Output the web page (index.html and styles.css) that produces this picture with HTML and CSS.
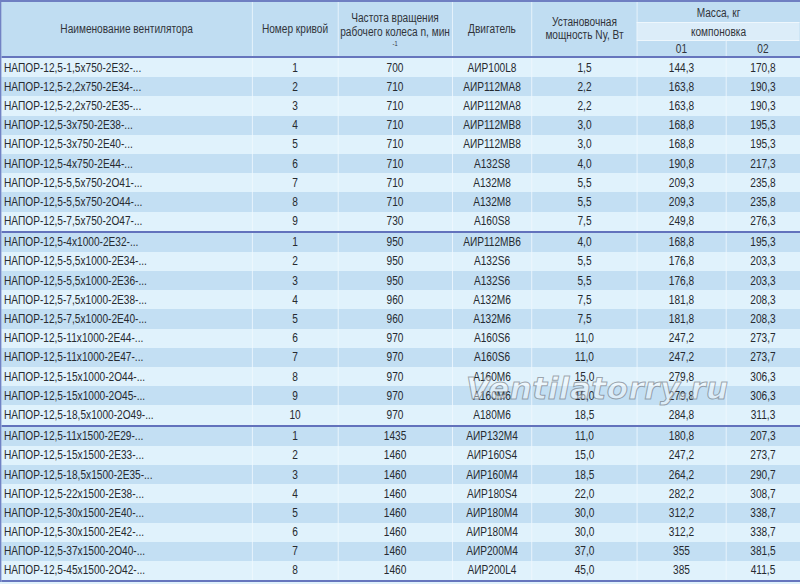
FILE: index.html
```html
<!DOCTYPE html>
<html lang="ru">
<head>
<meta charset="utf-8">
<title>Вентиляторы НАПОР-12,5</title>
<link rel="stylesheet" href="styles.css">
</head>
<body>
<div class="page">
<div class="sheet">
  <div class="head">
    <div class="h c1">Наименование вентилятора</div>
    <div class="h c2">Номер кривой</div>
    <div class="h c3"><span>Частота вращения</span><span>рабочего колеса n, мин</span><span class="sup">-1</span></div>
    <div class="h c4">Двигатель</div>
    <div class="h c5"><span>Установочная</span><span>мощность Ny, Вт</span></div>
    <div class="h mass">Масса, кг</div>
    <div class="h komp">компоновка</div>
    <div class="h v01">01</div>
    <div class="h v02">02</div>
  </div>
  <div class="rows">
    <div class="r"><span>НАПОР-12,5-1,5х750-2Е32-...</span><span>1</span><span>700</span><span>АИР100L8</span><span>1,5</span><span>144,3</span><span>170,8</span></div>
    <div class="r"><span>НАПОР-12,5-2,2х750-2Е34-...</span><span>2</span><span>710</span><span>АИР112МА8</span><span>2,2</span><span>163,8</span><span>190,3</span></div>
    <div class="r"><span>НАПОР-12,5-2,2х750-2Е35-...</span><span>3</span><span>710</span><span>АИР112МА8</span><span>2,2</span><span>163,8</span><span>190,3</span></div>
    <div class="r"><span>НАПОР-12,5-3х750-2Е38-...</span><span>4</span><span>710</span><span>АИР112МВ8</span><span>3,0</span><span>168,8</span><span>195,3</span></div>
    <div class="r"><span>НАПОР-12,5-3х750-2Е40-...</span><span>5</span><span>710</span><span>АИР112МВ8</span><span>3,0</span><span>168,8</span><span>195,3</span></div>
    <div class="r"><span>НАПОР-12,5-4х750-2Е44-...</span><span>6</span><span>710</span><span>А132S8</span><span>4,0</span><span>190,8</span><span>217,3</span></div>
    <div class="r"><span>НАПОР-12,5-5,5х750-2О41-...</span><span>7</span><span>710</span><span>А132М8</span><span>5,5</span><span>209,3</span><span>235,8</span></div>
    <div class="r"><span>НАПОР-12,5-5,5х750-2О44-...</span><span>8</span><span>710</span><span>А132М8</span><span>5,5</span><span>209,3</span><span>235,8</span></div>
    <div class="r"><span>НАПОР-12,5-7,5х750-2О47-...</span><span>9</span><span>730</span><span>А160S8</span><span>7,5</span><span>249,8</span><span>276,3</span></div>
    <div class="r grp"><span>НАПОР-12,5-4х1000-2Е32-...</span><span>1</span><span>950</span><span>АИР112МВ6</span><span>4,0</span><span>168,8</span><span>195,3</span></div>
    <div class="r"><span>НАПОР-12,5-5,5х1000-2Е34-...</span><span>2</span><span>950</span><span>А132S6</span><span>5,5</span><span>176,8</span><span>203,3</span></div>
    <div class="r"><span>НАПОР-12,5-5,5х1000-2Е36-...</span><span>3</span><span>950</span><span>А132S6</span><span>5,5</span><span>176,8</span><span>203,3</span></div>
    <div class="r"><span>НАПОР-12,5-7,5х1000-2Е38-...</span><span>4</span><span>960</span><span>А132М6</span><span>7,5</span><span>181,8</span><span>208,3</span></div>
    <div class="r"><span>НАПОР-12,5-7,5х1000-2Е40-...</span><span>5</span><span>960</span><span>А132М6</span><span>7,5</span><span>181,8</span><span>208,3</span></div>
    <div class="r"><span>НАПОР-12,5-11х1000-2Е44-...</span><span>6</span><span>970</span><span>А160S6</span><span>11,0</span><span>247,2</span><span>273,7</span></div>
    <div class="r"><span>НАПОР-12,5-11х1000-2Е47-...</span><span>7</span><span>970</span><span>А160S6</span><span>11,0</span><span>247,2</span><span>273,7</span></div>
    <div class="r"><span>НАПОР-12,5-15х1000-2О44-...</span><span>8</span><span>970</span><span>А160М6</span><span>15,0</span><span>279,8</span><span>306,3</span></div>
    <div class="r"><span>НАПОР-12,5-15х1000-2О45-...</span><span>9</span><span>970</span><span>А160М6</span><span>15,0</span><span>279,8</span><span>306,3</span></div>
    <div class="r"><span>НАПОР-12,5-18,5х1000-2О49-...</span><span>10</span><span>970</span><span>А180М6</span><span>18,5</span><span>284,8</span><span>311,3</span></div>
    <div class="r grp"><span>НАПОР-12,5-11х1500-2Е29-...</span><span>1</span><span>1435</span><span>АИР132М4</span><span>11,0</span><span>180,8</span><span>207,3</span></div>
    <div class="r"><span>НАПОР-12,5-15х1500-2Е33-...</span><span>2</span><span>1460</span><span>АИР160S4</span><span>15,0</span><span>247,2</span><span>273,7</span></div>
    <div class="r"><span>НАПОР-12,5-18,5х1500-2Е35-...</span><span>3</span><span>1460</span><span>АИР160М4</span><span>18,5</span><span>264,2</span><span>290,7</span></div>
    <div class="r"><span>НАПОР-12,5-22х1500-2Е38-...</span><span>4</span><span>1460</span><span>АИР180S4</span><span>22,0</span><span>282,2</span><span>308,7</span></div>
    <div class="r"><span>НАПОР-12,5-30х1500-2Е40-...</span><span>5</span><span>1460</span><span>АИР180М4</span><span>30,0</span><span>312,2</span><span>338,7</span></div>
    <div class="r"><span>НАПОР-12,5-30х1500-2Е42-...</span><span>6</span><span>1460</span><span>АИР180М4</span><span>30,0</span><span>312,2</span><span>338,7</span></div>
    <div class="r"><span>НАПОР-12,5-37х1500-2О40-...</span><span>7</span><span>1460</span><span>АИР200М4</span><span>37,0</span><span>355</span><span>381,5</span></div>
    <div class="r"><span>НАПОР-12,5-45х1500-2О42-...</span><span>8</span><span>1460</span><span>АИР200L4</span><span>45,0</span><span>385</span><span>411,5</span></div>
  </div>
</div>
<div class="mark">Ventilatorry.ru</div>
</div>
</body>
</html>
```
FILE: styles.css
```css
html, body {
  margin: 0;
  padding: 0;
  background: #dff1fb;
}
body {
  width: 800px;
  height: 584px;
  overflow: hidden;
  font-family: "Liberation Sans", Arial, sans-serif;
  font-size: 12.5px;
  color: #262a30;
}
.page {
  position: relative;
  width: 800px;
  height: 584px;
  overflow: hidden;
}
/* The reference uses a condensed face (Arial Narrow); we draw it at
   full width and squeeze the whole sheet horizontally by 0.81. */
.sheet {
  width: calc(800px / 0.81);
  border-left: 2.5px solid #7182c4;
  border-top: 2px solid #6f7fc2;
  box-sizing: border-box;
  transform: scaleX(0.81);
  transform-origin: 0 0;
}
.head,
.r {
  display: grid;
  grid-template-columns:
    calc(250px / 0.81) calc(86px / 0.81) calc(114px / 0.81) calc(80px / 0.81)
    calc(105px / 0.81) calc(89px / 0.81) calc(74px / 0.81);
}
.head {
  grid-template-rows: 20px 18px 16px;
  background: #c0ddf2;
  border-bottom: 2px solid #6675bd;
}
.h {
  display: flex;
  flex-direction: column;
  align-items: center;
  justify-content: center;
  text-align: center;
  line-height: 14px;
  color: #30343a;
  border-left: 1.5px solid #eef7fd;
  white-space: nowrap;
}
.c1 { grid-column: 1; grid-row: 1 / 4; border-left: none; }
.c2 { grid-column: 2; grid-row: 1 / 4; }
.c3 { grid-column: 3; grid-row: 1 / 4; padding-top: 1px; }
.c4 { grid-column: 4; grid-row: 1 / 4; }
.c5 { grid-column: 5; grid-row: 1 / 4; }
.c3 .sup { font-size: 7px; line-height: 9px; }
.c5 span { line-height: 13px; }
.mass { grid-column: 6 / 8; grid-row: 1; padding-top: 2px; }
.komp { grid-column: 6 / 8; grid-row: 2; background: #dcedf9; border-top: 1px solid #eef7fd; }
.v01 { grid-column: 6; grid-row: 3; border-top: 1px solid #eef7fd; }
.v02 { grid-column: 7; grid-row: 3; border-top: 1px solid #eef7fd; }
.rows {
  border-bottom: 2px solid #6675bd;
}
.r {
  box-sizing: content-box;
  height: 19.2px;
  background: #e0f2fc;
}
.r:nth-child(even) { background: #c3dff3; }
.r.grp {
  border-top: 2px solid #6272bc;
}
.r span {
  display: flex;
  align-items: center;
  justify-content: center;
  border-left: 1.5px solid #f0f8fe;
  white-space: nowrap;
}
.r span:first-child {
  justify-content: flex-start;
  padding-left: 3px;
  border-left: none;
}
.mark {
  position: absolute;
  left: 466px;
  top: 370px;
  font-family: "DejaVu Sans", sans-serif;
  font-weight: bold;
  font-style: italic;
  font-size: 31px;
  letter-spacing: 0.5px;
  color: rgba(255, 255, 255, 0.45);
  -webkit-text-stroke: 1px rgba(90, 95, 105, 0.55);
  pointer-events: none;
}
```
